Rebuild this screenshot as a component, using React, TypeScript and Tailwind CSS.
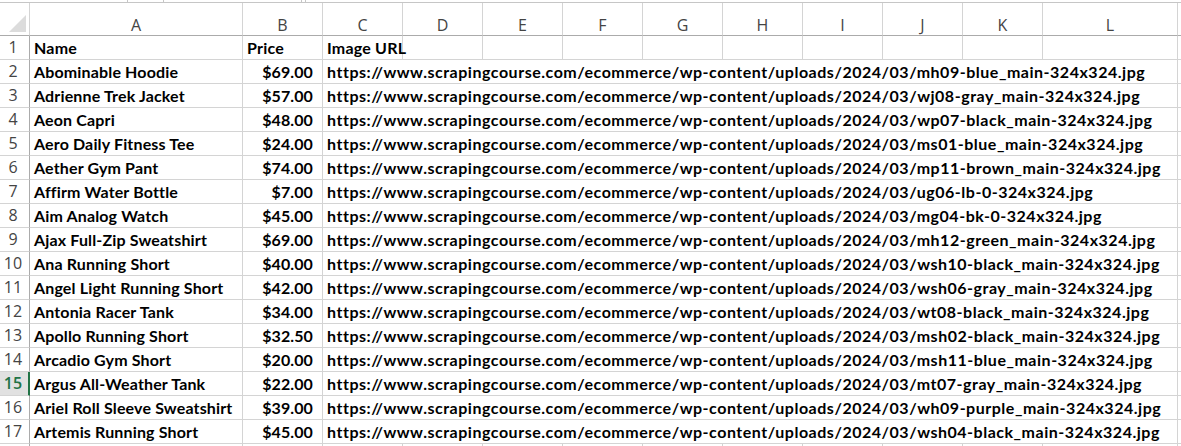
import React from "react";

const BASE = "https://www.scrapingcourse.com/ecommerce/wp-content/uploads/2024/03/";

const products: [string, string, string][] = [
  ["Abominable Hoodie", "$69.00", "mh09-blue_main-324x324.jpg"],
  ["Adrienne Trek Jacket", "$57.00", "wj08-gray_main-324x324.jpg"],
  ["Aeon Capri", "$48.00", "wp07-black_main-324x324.jpg"],
  ["Aero Daily Fitness Tee", "$24.00", "ms01-blue_main-324x324.jpg"],
  ["Aether Gym Pant", "$74.00", "mp11-brown_main-324x324.jpg"],
  ["Affirm Water Bottle", "$7.00", "ug06-lb-0-324x324.jpg"],
  ["Aim Analog Watch", "$45.00", "mg04-bk-0-324x324.jpg"],
  ["Ajax Full-Zip Sweatshirt", "$69.00", "mh12-green_main-324x324.jpg"],
  ["Ana Running Short", "$40.00", "wsh10-black_main-324x324.jpg"],
  ["Angel Light Running Short", "$42.00", "wsh06-gray_main-324x324.jpg"],
  ["Antonia Racer Tank", "$34.00", "wt08-black_main-324x324.jpg"],
  ["Apollo Running Short", "$32.50", "msh02-black_main-324x324.jpg"],
  ["Arcadio Gym Short", "$20.00", "msh11-blue_main-324x324.jpg"],
  ["Argus All-Weather Tank", "$22.00", "mt07-gray_main-324x324.jpg"],
  ["Ariel Roll Sleeve Sweatshirt", "$39.00", "wh09-purple_main-324x324.jpg"],
  ["Artemis Running Short", "$45.00", "wsh04-black_main-324x324.jpg"],
];

const LETTERS = ["A", "B", "C", "D", "E", "F", "G", "H", "I", "J", "K", "L"];
const SELECTED_ROW = 15;

const headFont = { fontFamily: '"Open Sans", "Liberation Sans", sans-serif' };
const cellFont = { fontFamily: 'Lato, "Open Sans", "Liberation Sans", sans-serif' };

const cellText = "text-[16px] leading-[24px] font-bold text-black";

function RowHeader({ n }: { n: number }) {
  const selected = n === SELECTED_ROW;
  return (
    <div
      style={headFont}
      className={
        selected
          ? "h-6 border-b border-r-2 border-b-[#d4d4d4] border-r-[#217346] bg-[#e1e1e1] pr-[2px] text-center text-[16px] leading-[23px] font-semibold text-[#217346]"
          : "h-6 border-b border-r border-b-[#d4d4d4] border-r-[#ababab] pr-[3px] text-center text-[16px] leading-[23px] text-[#444]"
      }
    >
      {n}
    </div>
  );
}

export default function App() {
  return (
    <div className="h-[446px] w-[1181px] overflow-hidden bg-white">
      {/* bottom edges of the name box and formula bar */}
      <div className="flex h-[3px] border-b border-[#c6c6c6]">
        <div className="w-[128px] border-r border-[#c6c6c6]" />
        <div className="ml-[35px] w-[139px] border-x border-[#c6c6c6]" />
        <div className="ml-[3px] flex-1 border-l border-[#c6c6c6]" />
      </div>

      <div className="grid grid-cols-[30px_213px_80px_80px_80px_80px_80px_80px_80px_80px_80px_80px_135px_1fr]">
        {/* select-all corner */}
        <div className="relative h-[33px] border-b border-r border-[#ababab] border-r-[#d4d4d4]">
          <svg className="absolute bottom-[3px] right-[3px]" width="17" height="17" viewBox="0 0 17 17">
            <polygon points="17,0 17,17 0,17" fill="#dcdcdc" />
          </svg>
        </div>
        {LETTERS.map((l) => (
          <div
            key={l}
            style={headFont}
            className="h-[33px] border-b border-r border-b-[#ababab] border-r-[#d4d4d4] pt-[13px] text-center text-[16px] leading-[18px] text-[#444]"
          >
            {l}
          </div>
        ))}
        <div className="h-[33px] border-b border-[#ababab]" />

        {/* row 1: column titles */}
        <RowHeader n={1} />
        <div style={cellFont} className={"h-6 border-b border-r border-[#d4d4d4] pl-[4px] tracking-[0.2px] " + cellText}>
          Name
        </div>
        <div style={cellFont} className={"h-6 border-b border-r border-[#d4d4d4] pl-[4px] tracking-[0.2px] " + cellText}>
          Price
        </div>
        <div style={cellFont} className={"h-6 whitespace-nowrap border-b border-r border-[#d4d4d4] pl-[4px] tracking-[0.2px] " + cellText}>
          Image URL
        </div>
        {LETTERS.slice(3).map((l) => (
          <div key={l} className="h-6 border-b border-r border-[#d4d4d4]" />
        ))}
        <div className="h-6 border-b border-[#d4d4d4]" />

        {products.map(([name, price, file], i) => (
          <React.Fragment key={name}>
            <RowHeader n={i + 2} />
            <div style={cellFont} className={"h-6 overflow-hidden whitespace-nowrap border-b border-r border-[#d4d4d4] pl-[4px] tracking-[0.15px] " + cellText}>
              {name}
            </div>
            <div style={cellFont} className={"h-6 border-b border-r border-[#d4d4d4] pr-[9px] text-right tracking-[0.1px] " + cellText}>
              {price}
            </div>
            <div style={cellFont} className={"col-span-10 h-6 overflow-hidden whitespace-nowrap border-b border-r border-[#d4d4d4] pl-[4px] tracking-[0.52px] " + cellText}>
              {BASE + file}
            </div>
            <div className="h-6 border-b border-[#d4d4d4]" />
          </React.Fragment>
        ))}

        {/* next row, cut off by the window edge */}
        <div className="h-6 border-r border-[#ababab]" />
        <div className="h-6 border-r border-[#d4d4d4]" />
        <div className="h-6 border-r border-[#d4d4d4]" />
        {LETTERS.slice(2).map((l) => (
          <div key={l} className="h-6 border-r border-[#d4d4d4]" />
        ))}
        <div className="h-6" />
      </div>
    </div>
  );
}
